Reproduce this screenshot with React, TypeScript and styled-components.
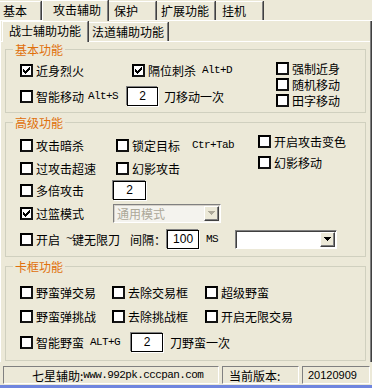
import React from "react";
import styled, { createGlobalStyle } from "styled-components";

const Global = createGlobalStyle`
  html, body { margin: 0; padding: 0; background: #ECE9D8; }
  body { font-family: "Noto Sans CJK SC", sans-serif; font-size: 12px; color: #000; }
  * { box-sizing: border-box; }
`;

const Window = styled.div`
  width: 372px;
  height: 388px;
  background: #ECE9D8;
  display: flex;
  flex-direction: column;
  overflow: hidden;
`;

const TopTabs = styled.div`
  display: flex;
  align-items: flex-end;
  height: 21px;
  border-bottom: 1px solid #fff;
  flex-shrink: 0;
`;

const Tab = styled.div<{ $active?: boolean; $w: number; $pl: number }>`
  width: ${(p) => p.$w}px;
  height: ${(p) => (p.$active ? 21 : 19)}px;
  margin-bottom: ${(p) => (p.$active ? -1 : 0)}px;
  padding-left: ${(p) => p.$pl}px;
  padding-bottom: ${(p) => (p.$active ? 2 : 0)}px;
  display: flex;
  align-items: center;
  line-height: 12px;
  background: #ECE9D8;
  border-top: 1px solid #fff;
  border-left: ${(p) => (p.$active ? "1px solid #fff" : "none")};
  border-right: 1px solid #808080;
  box-shadow: 1px 0 0 #404040;
  margin-right: 1px;
  position: relative;
  z-index: ${(p) => (p.$active ? 1 : 0)};
  white-space: nowrap;
  flex-shrink: 0;
`;

const Page = styled.div`
  flex: 1;
  display: flex;
  flex-direction: column;
  border-left: 1px solid #fff;
  border-right: 1px solid #808080;
  box-shadow: 1px 0 0 #404040;
  margin-right: 1px;
  padding: 0 0 1px 0;
`;

const SubTabs = styled.div`
  display: flex;
  align-items: flex-end;
  height: 21px;
  padding-left: 1px;
  border-bottom: 1px solid #fff;
  flex-shrink: 0;
`;

const Group = styled.fieldset<{ $h: number; $mt: number }>`
  margin: ${(p) => p.$mt}px 4px 0 4px;
  padding: 0;
  height: ${(p) => p.$h}px;
  border: 1px solid #D0D0BF;
  min-width: 0;
  flex-shrink: 0;
`;

const Legend = styled.legend`
  color: #E0700C;
  padding: 0 2px;
  margin-left: 7px;
  font-size: 12px;
  line-height: 13px;
  height: 13px;
`;

const Row = styled.div<{ $h: number; $pl?: number }>`
  display: flex;
  align-items: center;
  height: ${(p) => p.$h}px;
  padding-left: ${(p) => p.$pl ?? 14}px;
  white-space: nowrap;
  flex-shrink: 0;
`;

const Cell = styled.div<{ $w?: number }>`
  display: flex;
  align-items: center;
  width: ${(p) => (p.$w ? p.$w + "px" : "auto")};
  flex-shrink: 0;
`;

const Split = styled.div`
  display: flex;
`;

const Col = styled.div<{ $w?: number; $pt?: number }>`
  display: flex;
  flex-direction: column;
  width: ${(p) => (p.$w ? p.$w + "px" : "auto")};
  padding-top: ${(p) => p.$pt ?? 0}px;
`;

const Stack = styled.div<{ $pt: number }>`
  display: flex;
  flex-direction: column;
  padding-top: ${(p) => p.$pt}px;
`;

const BoxWrap = styled.span`
  width: 13px;
  height: 13px;
  background: #fff;
  border: 2px solid #141414;
  border-top-color: #000;
  border-left-color: #000;
  display: inline-flex;
  align-items: center;
  justify-content: center;
  margin-right: 3px;
  flex-shrink: 0;
`;

const Label = styled.span<{ $ml?: number }>`
  line-height: 13px;
  margin-left: ${(p) => p.$ml ?? 0}px;
`;

const Mono = styled.span<{ $ml?: number }>`
  font-family: "Liberation Mono", monospace;
  font-size: 11px;
  letter-spacing: -0.6px;
  line-height: 13px;
  margin-left: ${(p) => p.$ml ?? 6}px;
`;

const Input = styled.div<{ $w: number; $ml?: number }>`
  width: ${(p) => p.$w}px;
  height: 19px;
  margin-left: ${(p) => p.$ml ?? 0}px;
  background: #fff;
  border: 1px solid #000;
  box-shadow: -1px -1px 0 #808080, 1px 1px 0 #fff;
  display: flex;
  align-items: center;
  justify-content: center;
  font-family: "Liberation Sans", sans-serif;
  font-size: 12px;
  flex-shrink: 0;
`;

const Combo = styled.div<{ $w: number; $ml?: number; $disabled?: boolean }>`
  width: ${(p) => p.$w}px;
  height: 19px;
  margin-left: ${(p) => p.$ml ?? 0}px;
  background: ${(p) => (p.$disabled ? "#F4F3EE" : "#fff")};
  border-top: 1px solid #808080;
  border-left: 1px solid #808080;
  border-right: 1px solid #fff;
  border-bottom: 1px solid #fff;
  box-shadow: ${(p) => (p.$disabled ? "inset 1px 1px 0 #D4D0C8" : "inset 1px 1px 0 #404040")};
  display: flex;
  align-items: stretch;
  color: #ACA899;
  padding: 1px;
  flex-shrink: 0;
`;

const ComboText = styled.div`
  flex: 1;
  display: flex;
  align-items: center;
  padding-left: 2px;
`;

const ComboBtn = styled.div<{ $disabled?: boolean }>`
  width: 15px;
  background: #ECE9D8;
  border-top: 1px solid #fff;
  border-left: 1px solid #fff;
  border-right: 1px solid #404040;
  border-bottom: 1px solid #404040;
  box-shadow: inset -1px -1px 0 #808080;
  display: flex;
  align-items: center;
  justify-content: center;
`;

const Status = styled.div`
  display: flex;
  height: 23px;
  padding: 4px 0 1px 3px;
  gap: 3px;
  flex-shrink: 0;
`;

const Panel = styled.div<{ $w: number; $pl: number }>`
  width: ${(p) => p.$w}px;
  border-top: 1px solid #808080;
  border-left: 1px solid #808080;
  border-right: 1px solid #fff;
  border-bottom: 1px solid #fff;
  display: flex;
  align-items: center;
  padding-left: ${(p) => p.$pl}px;
  white-space: nowrap;
  flex-shrink: 0;
`;

const Digits = styled.span`
  font-family: "Liberation Sans", sans-serif;
  font-size: 11px;
`;

const Frame = styled.div`
  height: 3px;
  background: #7086DE;
  flex-shrink: 0;
`;

const Check = ({ on }: { on?: boolean }) => (
  <BoxWrap>
    {on && (
      <svg width="7" height="7" viewBox="0 0 7 7" shapeRendering="crispEdges">
        <path d="M6 0h1v1h-1zM5 1h2v1h-2zM0 2h1v1h-1zM4 2h3v1h-3zM0 3h2v1h-2zM3 3h3v1h-3zM0 4h5v1h-5zM1 5h3v1h-3zM2 6h1v1h-1z" fill="#000" />
      </svg>
    )}
  </BoxWrap>
);

const Arrow = ({ color }: { color: string }) => (
  <svg width="7" height="4" viewBox="0 0 7 4" shapeRendering="crispEdges">
    <path d="M0 0h7v1h-7zM1 1h5v1h-5zM2 2h3v1h-3zM3 3h1v1h-1z" fill={color} />
  </svg>
);

const CB = ({ on, children }: { on?: boolean; children: React.ReactNode }) => (
  <>
    <Check on={on} />
    <Label>{children}</Label>
  </>
);

export default function App() {
  return (
    <Window>
      <Global />
      <TopTabs>
        <Tab $w={41} $pl={3}>基本</Tab>
        <Tab $active $w={66} $pl={10}>攻击辅助</Tab>
        <Tab $w={47} $pl={5}>保护</Tab>
        <Tab $w={58} $pl={4}>扩展功能</Tab>
        <Tab $w={47} $pl={6}>挂机</Tab>
      </TopTabs>
      <Page>
        <SubTabs>
          <Tab $active $w={86} $pl={6}>战士辅助功能</Tab>
          <Tab $w={79} $pl={3}>法道辅助功能</Tab>
        </SubTabs>

        <Group $h={70} $mt={1}>
          <Legend>基本功能</Legend>
          <Split>
            <Col $w={270}>
              <Row $h={28}>
                <Cell $w={112}><CB on>近身烈火</CB></Cell>
                <Cell><CB on>隔位刺杀</CB><Mono>Alt+D</Mono></Cell>
              </Row>
              <Row $h={24}>
                <Cell><CB>智能移动</CB><Mono $ml={4}>Alt+S</Mono></Cell>
                <Input $w={31} $ml={9}>2</Input>
                <Label $ml={6}>刀移动一次</Label>
              </Row>
            </Col>
            <Stack $pt={4}>
              <Row $h={16} $pl={0}><CB>强制近身</CB></Row>
              <Row $h={16} $pl={0}><CB>随机移动</CB></Row>
              <Row $h={16} $pl={0}><CB>田字移动</CB></Row>
            </Stack>
          </Split>
        </Group>

        <Group $h={141} $mt={3}>
          <Legend>高级功能</Legend>
          <Split>
            <Col $w={252} $pt={4}>
              <Row $h={24}>
                <Cell $w={96}><CB>攻击暗杀</CB></Cell>
                <Cell><CB>锁定目标</CB><Mono $ml={12}>Ctr+Tab</Mono></Cell>
              </Row>
              <Row $h={22}>
                <Cell $w={96}><CB>过攻击超速</CB></Cell>
                <Cell><CB>幻影攻击</CB></Cell>
              </Row>
            </Col>
            <Stack $pt={2}>
              <Row $h={21} $pl={0}><CB>开启攻击变色</CB></Row>
              <Row $h={21} $pl={0}><CB>幻影移动</CB></Row>
            </Stack>
          </Split>
          <Row $h={22}>
            <Cell $w={93}><CB>多倍攻击</CB></Cell>
            <Input $w={33}>2</Input>
          </Row>
          <Row $h={24}>
            <Cell $w={93}><CB on>过篮模式</CB></Cell>
            <Combo $w={108} $disabled>
              <ComboText>通用模式</ComboText>
              <ComboBtn><Arrow color="#ACA899" /></ComboBtn>
            </Combo>
          </Row>
          <Row $h={28}>
            <Check />
            <Label>开启</Label>
            <Mono $ml={6}>~</Mono>
            <Label>键无限刀</Label>
            <Label $ml={10}>间隔：</Label>
            <Input $w={32} $ml={1}>100</Input>
            <Mono $ml={7}>MS</Mono>
            <Combo $w={102} $ml={17}>
              <ComboText />
              <ComboBtn><Arrow color="#000" /></ComboBtn>
            </Combo>
          </Row>
        </Group>

        <Group $h={101} $mt={3}>
          <Legend>卡框功能</Legend>
          <Stack $pt={7}>
            <Row $h={24}>
              <Cell $w={92}><CB>野蛮弹交易</CB></Cell>
              <Cell $w={93}><CB>去除交易框</CB></Cell>
              <Cell><CB>超级野蛮</CB></Cell>
            </Row>
            <Row $h={24}>
              <Cell $w={92}><CB>野蛮弹挑战</CB></Cell>
              <Cell $w={93}><CB>去除挑战框</CB></Cell>
              <Cell><CB>开启无限交易</CB></Cell>
            </Row>
            <Row $h={28}>
              <Cell><CB>智能野蛮</CB><Mono $ml={6}>ALT+G</Mono></Cell>
              <Input $w={32} $ml={11}>2</Input>
              <Label $ml={7}>刀野蛮一次</Label>
            </Row>
          </Stack>
        </Group>
      </Page>
      <Status>
        <Panel $w={216} $pl={28}>七星辅助:<Mono $ml={0}>www.992pk.cccpan.com</Mono></Panel>
        <Panel $w={77} $pl={6}>当前版本:</Panel>
        <Panel $w={68} $pl={5}><Digits>20120909</Digits></Panel>
      </Status>
      <Frame />
    </Window>
  );
}
